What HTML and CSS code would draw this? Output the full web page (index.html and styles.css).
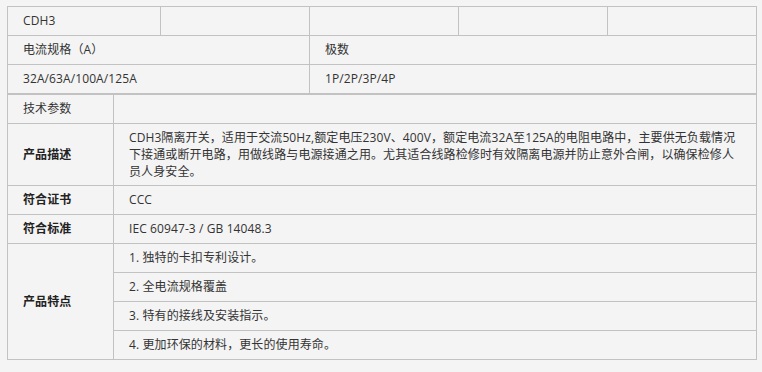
FILE: index.html
```html
<!DOCTYPE html>
<html lang="zh">
<head>
<meta charset="utf-8">
<title>CDH3</title>
<link rel="stylesheet" href="styles.css">
</head>
<body>
<div class="spec">
  <table class="grid top">
    <colgroup><col class="c1"><col class="c2"><col class="c2"><col class="c2"><col class="c3"></colgroup>
    <tr><td>CDH3</td><td></td><td></td><td></td><td></td></tr>
    <tr><td colspan="2">电流规格（A）</td><td colspan="3">极数</td></tr>
    <tr><td colspan="2">32A/63A/100A/125A</td><td colspan="3">1P/2P/3P/4P</td></tr>
  </table>
  <table class="grid params">
    <colgroup><col class="label"><col class="value"></colgroup>
    <tr><td>技术参数</td><td></td></tr>
    <tr><th>产品描述</th><td class="desc">CDH3隔离开关，适用于交流50Hz,额定电压230V、400V，额定电流32A至125A的电阻电路中，主要供无负载情况<br>下接通或断开电路，用做线路与电源接通之用。尤其适合线路检修时有效隔离电源并防止意外合闸，以确保检修人<br>员人身安全。</td></tr>
    <tr><th>符合证书</th><td>CCC</td></tr>
    <tr><th>符合标准</th><td>IEC 60947-3 / GB 14048.3</td></tr>
    <tr><th rowspan="4">产品特点</th><td>1. 独特的卡扣专利设计。</td></tr>
    <tr><td>2. 全电流规格覆盖</td></tr>
    <tr><td>3. 特有的接线及安装指示。</td></tr>
    <tr><td>4. 更加环保的材料，更长的使用寿命。</td></tr>
  </table>
</div>
</body>
</html>
```
FILE: styles.css
```css
html, body {
  background: #f4f4f4;
}
body {
  margin: 0;
  padding: 6px 0 0 7px;
  font-family: "Open Sans", "Noto Sans CJK SC", sans-serif;
  font-size: 12px;
  color: #333;
  letter-spacing: 0.1px;
}
.spec {
  width: 750px;
}
.grid {
  width: 750px;
  border-collapse: collapse;
  table-layout: fixed;
  border: 1px solid #c2c2c2;
}
.grid td, .grid th {
  border: 1px solid #c2c2c2;
  padding: 5px 15px;
  line-height: 18px;
  height: 18px;
  text-align: left;
  vertical-align: middle;
  white-space: nowrap;
}
.grid th {
  font-weight: bold;
  color: #222;
}
.c1 { width: 153px; }
.c2 { width: 149px; }
.c3 { width: 149px; }
.label { width: 106px; }
.grid td.desc {
  line-height: 17px;
}
```
